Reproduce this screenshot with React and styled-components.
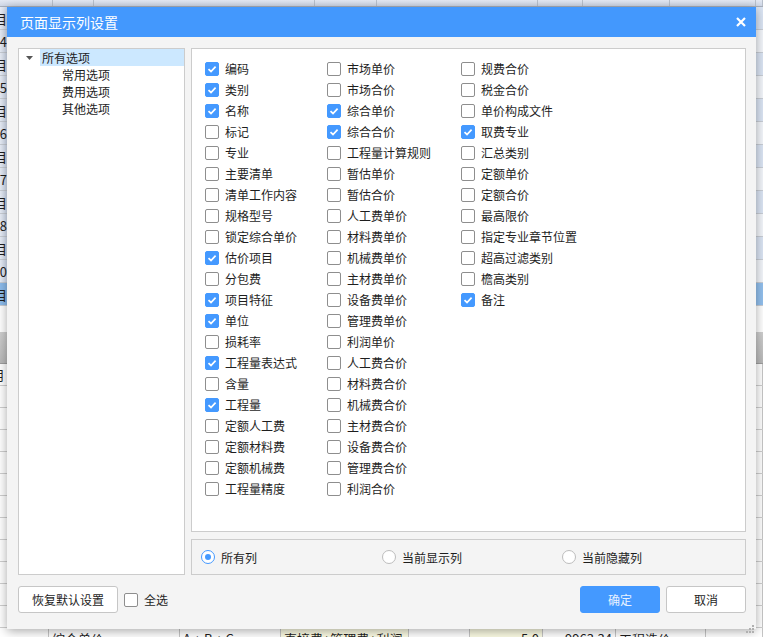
import React from "react";
import styled, { createGlobalStyle } from "styled-components";

const GlobalStyle = createGlobalStyle`
  body {
    margin: 0;
    font-family: "Noto Sans CJK SC", "Noto Sans", sans-serif;
    font-size: 12px;
    color: #1e1e1e;
  }
`;

const Screen = styled.div`
  position: relative;
  width: 763px;
  height: 637px;
  overflow: hidden;
  background: #ffffff;
`;

/* ---------- spreadsheet behind the dialog ---------- */

const Sheet = styled.div`
  display: flex;
  flex-direction: column;
  width: 763px;
`;

const SheetHeader = styled.div`
  display: flex;
  height: 6px;
  background: linear-gradient(#e4e9f3, #cfd8e8);
  border-bottom: 1px solid #a9b0bb;
`;

const HeaderCell = styled.div`
  width: ${p => p.w}px;
  flex: ${p => (p.w ? "none" : 1)};
  border-right: 1px solid #b8c0cc;
  box-sizing: border-box;
`;

const SheetRow = styled.div`
  display: flex;
  height: 23px;
  box-sizing: border-box;
  border-bottom: 1px solid #c9ced6;
  background: ${p => (p.selected ? "#93c0ee" : p.alt ? "#dbe5f4" : "#f3f6fb")};
`;

const RowHead = styled.div`
  width: 8px;
  flex: none;
  overflow: hidden;
  box-sizing: border-box;
  display: flex;
  align-items: center;
  justify-content: flex-end;
  font-size: 13px;
  white-space: nowrap;
  background: ${p => (p.selected ? "#8dbcec" : "linear-gradient(to right, #e9eef7, #d3ddef)")};
  border-right: 1px solid #b8c0cc;
`;

const Gap = styled.div`
  height: 26px;
  background: #ffffff;
`;

const GrayBand = styled.div`
  height: 31px;
  background: linear-gradient(#cfcfcf, #b9b9b9);
  border-bottom: 1px solid #9e9e9e;
`;

const LowRow = styled.div`
  display: flex;
  height: 22px;
  box-sizing: border-box;
  border-bottom: 1px solid #cfcfcf;
  background: #ffffff;
`;

const LowCell = styled.div`
  width: ${p => p.w}px;
  flex: ${p => (p.w ? "none" : 1)};
  box-sizing: border-box;
  border-right: 1px solid #c6c6c6;
  padding: 0 3px;
  font-size: 13px;
  line-height: 22px;
  white-space: nowrap;
  overflow: hidden;
  display: flex;
  justify-content: ${p => (p.right ? "flex-end" : "flex-start")};
  background: ${p => (p.yellow ? "#fbfbe3" : "transparent")};
`;

/* ---------- dialog ---------- */

const Dialog = styled.div`
  position: absolute;
  left: 7px;
  top: 7px;
  width: 749px;
  height: 622px;
  background: #f4f4f4;
  box-shadow: 0 2px 10px rgba(0, 0, 0, 0.35);
  display: flex;
  flex-direction: column;
`;

const TitleBar = styled.div`
  height: 30px;
  flex: none;
  background: #4398fd;
  color: #ffffff;
  display: flex;
  align-items: center;
  justify-content: space-between;
  padding: 0 9px 0 13px;
  font-size: 14px;
`;

const CloseButton = styled.div`
  width: 12px;
  height: 12px;
  display: flex;
  align-items: center;
  justify-content: center;
`;

const Body = styled.div`
  display: grid;
  grid-template-columns: 167px 1fr;
  gap: 6px;
  padding: 11px 10px 0 11px;
  height: 527px;
  box-sizing: content-box;
`;

const TreePanel = styled.div`
  border: 1px solid #cccccc;
  background: #ffffff;
`;

const TreeRow = styled.div`
  display: flex;
  align-items: center;
  height: 17px;
  padding-left: ${p => p.indent}px;
`;

const Toggle = styled.div`
  width: 21px;
  display: flex;
  justify-content: flex-start;
  padding-left: 7px;
  box-sizing: border-box;
`;

const TreeLabel = styled.div`
  flex: 1;
  height: 17px;
  line-height: 17px;
  padding-left: 2px;
  background: ${p => (p.active ? "#cce8ff" : "transparent")};
`;

const RightSide = styled.div`
  display: flex;
  flex-direction: column;
  gap: 7px;
`;

const OptionsPanel = styled.div`
  height: 484px;
  box-sizing: border-box;
  border: 1px solid #cccccc;
  background: #ffffff;
  padding: 9px 0 0 13px;
  display: flex;
`;

const OptionColumn = styled.div`
  width: ${p => p.w}px;
  display: flex;
  flex-direction: column;
`;

const OptionRow = styled.label`
  display: flex;
  align-items: center;
  gap: 6px;
  height: 21px;
  white-space: nowrap;
`;

const Box = styled.span`
  width: 14px;
  height: 14px;
  box-sizing: border-box;
  border-radius: 2px;
  flex: none;
  display: flex;
  align-items: center;
  justify-content: center;
  background: ${p => (p.checked ? "#4499ff" : "#ffffff")};
  border: 1px solid ${p => (p.checked ? "#4499ff" : "#8e8e8e")};
`;

const RadioPanel = styled.div`
  height: 36px;
  box-sizing: border-box;
  border: 1px solid #cccccc;
  background: #f4f4f4;
  display: grid;
  grid-template-columns: 181px 180px 1fr;
  align-items: center;
  padding-left: 9px;
`;

const RadioItem = styled.label`
  display: flex;
  align-items: center;
  gap: 6px;
`;

const RadioCircle = styled.span`
  width: 14px;
  height: 14px;
  box-sizing: border-box;
  border-radius: 50%;
  background: #ffffff;
  border: 1px solid ${p => (p.checked ? "#4499ff" : "#bdbdbd")};
  display: flex;
  align-items: center;
  justify-content: center;

  &::after {
    content: "";
    width: 6px;
    height: 6px;
    border-radius: 50%;
    background: ${p => (p.checked ? "#4499ff" : "transparent")};
  }
`;

const Footer = styled.div`
  display: flex;
  align-items: center;
  padding: 11px 10px 0 11px;
`;

const Button = styled.button`
  width: ${p => p.w}px;
  height: 27px;
  border-radius: 3px;
  font-family: inherit;
  font-size: 12px;
  padding: 0;
  cursor: pointer;
  background: ${p => (p.primary ? "#4499ff" : "#ffffff")};
  color: ${p => (p.primary ? "#e8f2ff" : "#1e1e1e")};
  border: 1px solid ${p => (p.primary ? "#4499ff" : "#c6c6c6")};
  margin-left: ${p => p.ml || 0}px;
`;

const SelectAll = styled.label`
  display: flex;
  align-items: center;
  gap: 6px;
  margin-left: 6px;
`;

const Spacer = styled.div`
  flex: 1;
`;

const Grip = styled.div`
  position: absolute;
  right: 2px;
  bottom: 2px;
  width: 8px;
  height: 8px;
`;

const Check = ({ checked }) => (
  <Box checked={checked}>
    {checked && (
      <svg width="10" height="10" viewBox="0 0 10 10">
        <path d="M1.5 5.2 L4 7.5 L8.6 2.6" fill="none" stroke="#fff" strokeWidth="1.7" />
      </svg>
    )}
  </Box>
);

const col1 = [
  ["编码", 1], ["类别", 1], ["名称", 1], ["标记"], ["专业"], ["主要清单"], ["清单工作内容"],
  ["规格型号"], ["锁定综合单价"], ["估价项目", 1], ["分包费"], ["项目特征", 1], ["单位", 1],
  ["损耗率"], ["工程量表达式", 1], ["含量"], ["工程量", 1], ["定额人工费"], ["定额材料费"],
  ["定额机械费"], ["工程量精度"],
];

const col2 = [
  ["市场单价"], ["市场合价"], ["综合单价", 1], ["综合合价", 1], ["工程量计算规则"], ["暂估单价"],
  ["暂估合价"], ["人工费单价"], ["材料费单价"], ["机械费单价"], ["主材费单价"], ["设备费单价"],
  ["管理费单价"], ["利润单价"], ["人工费合价"], ["材料费合价"], ["机械费合价"], ["主材费合价"],
  ["设备费合价"], ["管理费合价"], ["利润合价"],
];

const col3 = [
  ["规费合价"], ["税金合价"], ["单价构成文件"], ["取费专业", 1], ["汇总类别"], ["定额单价"],
  ["定额合价"], ["最高限价"], ["指定专业章节位置"], ["超高过滤类别"], ["檐高类别"], ["备注", 1],
];

const columns = [
  { w: 122, items: col1 },
  { w: 134, items: col2 },
  { w: 150, items: col3 },
];

const topRows = ["-目", "4", "-目", "5", "-目", "6", "-目", "7", "-目", "8", "-目", "10", "-目"];
const headerWidths = [53, 41, 221, 62, 161, 45, 87, 86, 0];
const lowWidths = [49, 131, 101, 128, 61, 73, 73, 90, 0];
const lastRow = ["", "综合单价", "A + B + C", "直接费+管理费+利润", "", "5.0", "9963.34", "工程造价", ""];

export default function App() {
  return (
    <Screen>
      <GlobalStyle />
      <Sheet>
        <SheetHeader>
          {headerWidths.map((w, i) => (
            <HeaderCell key={i} w={w} />
          ))}
        </SheetHeader>
        {topRows.map((t, i) => (
          <SheetRow key={i} alt={i % 2 === 0} selected={i === topRows.length - 1}>
            <RowHead selected={i === topRows.length - 1}>{t}</RowHead>
          </SheetRow>
        ))}
        <Gap />
        <GrayBand />
        <LowRow>
          <LowCell w={8} right>费用</LowCell>
          <LowCell />
        </LowRow>
        {Array.from({ length: 11 }).map((_, i) => (
          <LowRow key={i}>
            {lowWidths.map((w, j) => (
              <LowCell key={j} w={w} />
            ))}
          </LowRow>
        ))}
        <LowRow>
          {lowWidths.map((w, j) => (
            <LowCell key={j} w={w} right={j === 5 || j === 6} yellow={j === 3 || j === 5}>
              {lastRow[j]}
            </LowCell>
          ))}
        </LowRow>
      </Sheet>

      <Dialog>
        <TitleBar>
          <span>页面显示列设置</span>
          <CloseButton>
            <svg width="10" height="10" viewBox="0 0 10 10">
              <path d="M1 1 L9 9 M9 1 L1 9" stroke="#fff" strokeWidth="2.2" />
            </svg>
          </CloseButton>
        </TitleBar>

        <Body>
          <TreePanel>
            <TreeRow indent={0}>
              <Toggle>
                <svg width="7" height="4" viewBox="0 0 7 4">
                  <path d="M0 0 H7 L3.5 4 Z" fill="#555" />
                </svg>
              </Toggle>
              <TreeLabel active>所有选项</TreeLabel>
            </TreeRow>
            {["常用选项", "费用选项", "其他选项"].map(t => (
              <TreeRow key={t} indent={41}>
                <TreeLabel>{t}</TreeLabel>
              </TreeRow>
            ))}
          </TreePanel>

          <RightSide>
            <OptionsPanel>
              {columns.map((c, i) => (
                <OptionColumn key={i} w={c.w}>
                  {c.items.map(([label, on]) => (
                    <OptionRow key={label}>
                      <Check checked={!!on} />
                      <span>{label}</span>
                    </OptionRow>
                  ))}
                </OptionColumn>
              ))}
            </OptionsPanel>

            <RadioPanel>
              <RadioItem>
                <RadioCircle checked />
                <span>所有列</span>
              </RadioItem>
              <RadioItem>
                <RadioCircle />
                <span>当前显示列</span>
              </RadioItem>
              <RadioItem>
                <RadioCircle />
                <span>当前隐藏列</span>
              </RadioItem>
            </RadioPanel>
          </RightSide>
        </Body>

        <Footer>
          <Button w={100}>恢复默认设置</Button>
          <SelectAll>
            <Check />
            <span>全选</span>
          </SelectAll>
          <Spacer />
          <Button w={80} primary>确定</Button>
          <Button w={80} ml={6}>取消</Button>
        </Footer>

        <Grip>
          <svg width="8" height="8" viewBox="0 0 8 8">
            <rect x="6" y="0" width="2" height="2" fill="#b0b0b0" />
            <rect x="3" y="3" width="2" height="2" fill="#b0b0b0" />
            <rect x="6" y="3" width="2" height="2" fill="#b0b0b0" />
            <rect x="0" y="6" width="2" height="2" fill="#b0b0b0" />
            <rect x="3" y="6" width="2" height="2" fill="#b0b0b0" />
            <rect x="6" y="6" width="2" height="2" fill="#b0b0b0" />
          </svg>
        </Grip>
      </Dialog>
    </Screen>
  );
}
